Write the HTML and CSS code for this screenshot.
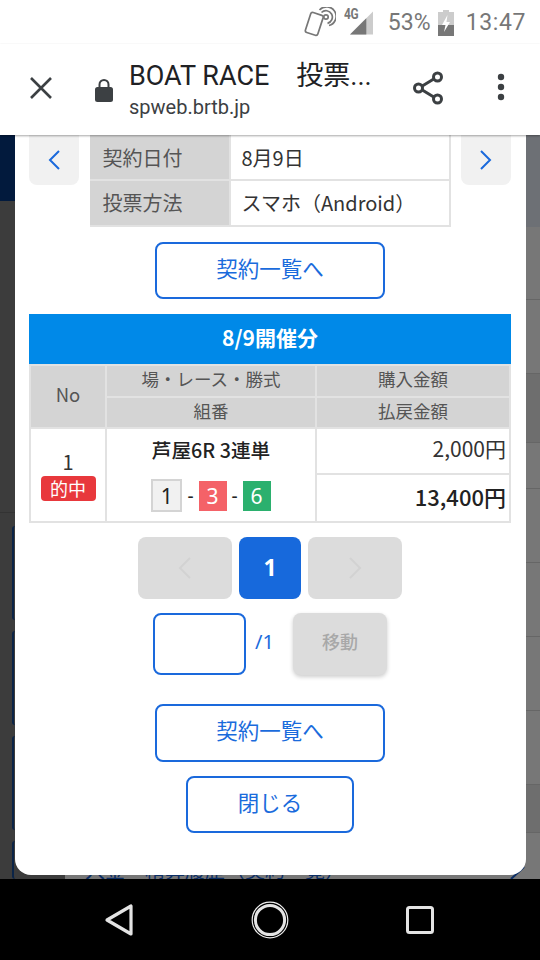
FILE: index.html
```html
<!DOCTYPE html>
<html lang="ja">
<head>
<meta charset="utf-8">
<title>BOAT RACE 投票</title>
<link rel="stylesheet" href="styles.css">
</head>
<body>
<div class="phone">
  <div class="status">
    <svg class="ic-nfc" viewBox="0 0 32 30" width="32" height="30"><g fill="none" stroke="#777" stroke-width="1.7"><rect x="-5" y="-10" width="13" height="21" rx="2" transform="translate(9 16) rotate(18)"/><circle cx="22" cy="10" r="2.2"/><path d="M17.5 5.5a6.4 6.4 0 1 1 6 10.8M15.5 3a9.5 9.5 0 1 1 9.5 15.5"/></g></svg>
    <span class="net">4G</span>
    <svg class="ic-signal" viewBox="0 0 24 24" width="24" height="24"><path d="M24 0V24H0Z" fill="#ccc"/><path d="M17 7V24H0Z" fill="#777"/></svg>
    <span class="pct">53%</span>
    <svg class="ic-batt" viewBox="0 0 16 26" width="16" height="26"><path d="M5 0h6v2h5v24H0V2h5Z" fill="#ccc"/><path d="M0 15h16v11H0Z" fill="#777"/><path d="M9.5 5 4 15h3.5L6 22l6-10H8.5Z" fill="#fff"/></svg>
    <span class="time">13:47</span>
  </div>
  <div class="toolbar">
    <svg class="ic-close" viewBox="0 0 24 24" width="24" height="24"><path d="M2 2 22 22M22 2 2 22" stroke="#3c4043" stroke-width="2.6" fill="none"/></svg>
    <svg class="ic-lock" viewBox="0 0 18 24" width="18" height="24"><path d="M4.5 10V6.500a4.500 4.500 0 0 1 9 0V10" fill="none" stroke="#3c4043" stroke-width="2"/><rect y="9" width="18" height="15" rx="2.500" fill="#3c4043"/></svg>
    <div class="title">
      <div class="title-main">BOAT RACE　投票...</div>
      <div class="title-sub">spweb.brtb.jp</div>
    </div>
    <svg class="ic-share" viewBox="0 0 32 34" width="32" height="34"><g fill="none" stroke="#3c4043" stroke-width="3"><path d="M7 17 25 6M7 17 25 28"/><circle cx="6.500" cy="17" r="4" fill="#fff"/><circle cx="25.500" cy="6" r="4" fill="#fff"/><circle cx="25.500" cy="28" r="4" fill="#fff"/></g></svg>
    <svg class="ic-more" viewBox="0 0 8 28" width="8" height="28"><circle cx="4" cy="4" r="3.200" fill="#3c4043"/><circle cx="4" cy="14" r="3.200" fill="#3c4043"/><circle cx="4" cy="24" r="3.200" fill="#3c4043"/></svg>
  </div>
  <div class="stage">
    <div class="side side-left">
      <div class="navy-top"></div>
      <div class="dark-a"></div>
      <div class="frame"></div>
      <div class="frame"></div>
      <div class="frame"></div>
      <div class="frame frame-last"></div>
    </div>
    <div class="center">
      <svg class="corner-stroke" viewBox="0 0 16 14" width="16" height="14"><path d="M1 14 14 2" stroke="#0b2e66" stroke-width="2" fill="none"/></svg>
      <div class="modal">
        <div class="info-row">
          <button class="arrow-btn"><svg viewBox="0 0 14 22" width="14" height="22"><path d="M12 2 3 11l9 9" fill="none" stroke="#1a69dc" stroke-width="2"/></svg></button>
          <table class="info">
            <tr><th>契約日付</th><td>8月9日</td></tr>
            <tr><th>投票方法</th><td>スマホ（Android）</td></tr>
          </table>
          <button class="arrow-btn"><svg viewBox="0 0 14 22" width="14" height="22"><path d="M2 2l9 9-9 9" fill="none" stroke="#1a69dc" stroke-width="2"/></svg></button>
        </div>
        <button class="btn btn-list btn-first">契約一覧へ</button>
        <div class="bar">8/9開催分</div>
        <table class="result">
          <colgroup><col class="c1"><col class="c2"><col class="c3"></colgroup>
          <tr class="h h-a"><th rowspan="2" class="no-h">No</th><th>場・レース・勝式</th><th>購入金額</th></tr>
          <tr class="h h-b"><th>組番</th><th>払戻金額</th></tr>
          <tr class="b1">
            <td rowspan="2" class="no"><div class="no-num">1</div><span class="hit">的中</span></td>
            <td rowspan="2" class="race">
              <div class="race-name">芦屋6R 3連単</div>
              <div class="combo"><span class="k k1">1</span><i>-</i><span class="k k3">3</span><i>-</i><span class="k k6">6</span></div>
            </td>
            <td class="amt">2,000円</td>
          </tr>
          <tr class="b2"><td class="amt amt-b">13,400円</td></tr>
        </table>
        <div class="pager">
          <span class="pg pg-wide"><svg viewBox="0 0 14 24" width="14" height="24"><path d="M12 2 2 12l10 10" fill="none" stroke="#d2d2d2" stroke-width="2"/></svg></span>
          <span class="pg pg-on">1</span>
          <span class="pg pg-wide"><svg viewBox="0 0 14 24" width="14" height="24"><path d="M2 2l10 10L2 22" fill="none" stroke="#d2d2d2" stroke-width="2"/></svg></span>
        </div>
        <div class="jump">
          <input class="jump-input" type="text" aria-label="page">
          <span class="jump-total">/1</span>
          <span class="jump-btn">移動</span>
        </div>
        <button class="btn btn-list btn-second">契約一覧へ</button>
        <button class="btn btn-close">閉じる</button>
      </div>
      <div class="peek"><div class="peek-text">入金・精算履歴（契約一覧）</div></div>
    </div>
    <div class="side side-right">
      <div class="sr sr-top"></div>
      <div class="sr h73"></div>
      <div class="sr h74"></div>
      <div class="sr h69 dk"></div>
      <div class="sr h46"></div>
      <div class="sr h74"></div>
      <div class="sr h74"></div>
      <div class="sr h74"></div>
      <div class="sr h74"></div>
      <div class="sr h48 dk"></div>
      <div class="sr fill"></div>
    </div>
  </div>
  <div class="navbar">
    <svg viewBox="0 0 30 34" width="30" height="34"><path d="M27 3V31L3 17Z" fill="none" stroke="#e4e4e4" stroke-width="3.200" stroke-linejoin="round"/></svg>
    <svg viewBox="0 0 38 38" width="38" height="38"><circle cx="19" cy="19" r="17.800" fill="none" stroke="#eee" stroke-width="1.200"/><circle cx="19" cy="19" r="14.600" fill="none" stroke="#e4e4e4" stroke-width="3"/></svg>
    <svg viewBox="0 0 28 28" width="28" height="28"><rect x="1.500" y="1.500" width="25" height="25" rx="2" fill="none" stroke="#e4e4e4" stroke-width="3"/></svg>
  </div>
</div>
</body>
</html>
```

FILE: styles.css
```css
* { box-sizing: border-box; }
html, body { margin: 0; padding: 0; }
body { width: 540px; height: 960px; overflow: hidden; background: #000; font-family: "Noto Sans CJK JP", "Noto Sans", sans-serif; }
.phone { width: 540px; height: 960px; display: flex; flex-direction: column; }

.status { height: 44px; background: #fff; display: flex; align-items: center; justify-content: flex-end; padding-right: 14px; color: #777; font-family: Roboto, sans-serif; }
.ic-nfc { margin-right: 8px; }
.net { font-size: 14px; font-weight: 700; align-self: flex-start; margin-top: 6px; width: 14px; letter-spacing: -0.5px; transform: scaleX(0.85); transform-origin: left; }
.ic-signal { margin-left: -8px; margin-right: 15px; margin-top: 2px; width: 23px; }
.pct { font-size: 23px; letter-spacing: 0.1px; margin-right: 7px; }
.ic-batt { margin-right: 12px; margin-top: 2px; }
.time { font-size: 23px; letter-spacing: 0.6px; }

.toolbar { height: 91px; background: #fff; display: flex; align-items: flex-start; box-shadow: 0 1px 2px rgba(0,0,0,.35); position: relative; z-index: 2; }
.ic-close { margin: 32px 0 0 29px; }
.ic-lock { margin: 34px 0 0 42px; }
.title { margin-left: 16px; width: 285px; color: #202124; font-family: Roboto, "Noto Sans CJK JP", sans-serif; }
.title-main { font-size: 27px; line-height: 30px; margin-top: 17px; white-space: nowrap; }
.title-sub { font-size: 20px; line-height: 24px; margin-top: 4px; color: #3c4043; }
.ic-share { margin: 27px 0 0 -2px; }
.ic-more { margin: 29px 0 0 53px; }

.stage { height: 744px; display: grid; grid-template-columns: 15px 511px 14px; overflow: hidden; }
.side { display: flex; flex-direction: column; }
.side-left { background: #3c3c3c; }
.navy-top { height: 66px; background: #021a3d; }
.dark-a { height: 312px; border-bottom: 1px solid #333; }
.frame { height: 94px; margin-top: 11px; margin-left: 12px; border-left: 2px solid #0b2447; border-radius: 4px 0 0 4px; }
.dark-a + .frame { margin-top: 13px; }
.frame-last { flex: 1; }
.sr { background: #777; border-bottom: 1px solid #666; }
.sr-top { height: 92px; background: #6d7075; border-bottom: 0; }
.h73 { height: 73px; }
.h74 { height: 74px; }
.h69 { height: 69px; }
.h46 { height: 46px; }
.h48 { height: 48px; }
.dk { background: #6e6e6e; }
.fill { flex: 1; border-bottom: 0; }

.center { display: flex; flex-direction: column; background: linear-gradient(90deg, #3c3c3c 50px, #777 50px); overflow: hidden; position: relative; }
.corner-stroke { position: absolute; right: 0; bottom: 0; }
.modal { height: 740px; flex: none; background: #fff; border-radius: 0 0 16px 16px; padding: 0 15px 0 14px; display: flex; flex-direction: column; align-items: center; position: relative; z-index: 1; }
.peek { height: 4px; padding-left: 70px; font-size: 20px; color: #0b2e66; overflow: hidden; white-space: nowrap; }
.peek-text { line-height: 20px; margin-top: -15px; }

.info-row { width: 482px; display: flex; justify-content: space-between; align-items: flex-start; flex: none; }
.arrow-btn { width: 50px; height: 50px; border: 0; padding: 0; background: #f1f1f1; border-radius: 0 0 8px 8px; display: flex; align-items: center; justify-content: center; }
.info { border-collapse: collapse; width: 361px; height: 91px; table-layout: fixed; font-size: 20px; line-height: 1.2; color: #333; }
.info th, .info td { border: 2px solid #e2e2e2; height: 46px; padding: 1px 0 1px 11px; text-align: left; font-weight: 400; }
.info tr:first-child th, .info tr:first-child td { border-top: 0; height: 45px; padding: 2px 0 0 11px; }
.info th { width: 140px; background: #d4d4d4; color: #555; border-left: 0; }
.info tr th, .info tr:first-child th { padding-left: 13px; }

.btn { background: #fff; border: 2px solid #1a69dc; border-radius: 8px; color: #1a6bdc; font-family: inherit; font-size: 21.5px; line-height: 1.2; padding: 0 0 6px; flex: none; }
.btn-list { width: 230px; height: 57px; }
.btn-first { margin-top: 15px; }
.btn-second { margin-top: 29px; height: 58px; }
.btn-close { width: 168px; height: 57px; margin-top: 14px; }

.bar { width: 482px; height: 50px; margin-top: 15px; padding-bottom: 4px; background: #0089e8; color: #fff; font-size: 21px; font-weight: 700; display: flex; align-items: center; justify-content: center; flex: none; }
.result { width: 482px; border-collapse: collapse; table-layout: fixed; border: 2px solid #e2e2e2; border-top: 0; flex: none; }
.c1 { width: 76px; }
.c2 { width: 210px; }
.result th, .result td { border: 2px solid #e2e2e2; padding: 0; }
.result th { background: #d4d4d4; font-weight: 400; color: #555; font-size: 17.5px; line-height: 1.2; padding-bottom: 5px; text-align: center; }
.h-a th { height: 32px; }
.h-b th { height: 31px; }
.result .no-h { font-size: 18.5px; }
.b1 td { height: 46px; }
.b2 td { height: 48px; }
.no { text-align: center; color: #333; font-size: 20px; }
.no-num { line-height: 24px; margin-top: 1px; }
.hit { display: block; width: 55px; height: 25px; line-height: 24px; margin: 2px auto 0; background: #e8383c; color: #fff; border-radius: 4px; font-size: 18px; }
.race { text-align: center; vertical-align: top; }
.race-name { font-size: 19.7px; font-weight: 500; color: #222; line-height: 28px; margin-top: 7px; }
.combo { display: flex; justify-content: center; align-items: center; gap: 5px; margin-top: 15px; font-size: 19px; color: #222; }
.combo i { font-style: normal; font-family: "Noto Sans", sans-serif; }
.k { width: 28px; height: 30px; display: flex; align-items: center; justify-content: center; font-family: "Noto Sans", sans-serif; font-size: 21px; }
.k1 { width: 31px; height: 33px; background: #f1f1f1; border: 2px solid #d4d4d4; color: #222; }
.k3 { background: #f46268; color: #fff; }
.k6 { background: #2bb06e; color: #fff; }
.result .amt { text-align: right; padding: 0 3px 4px 0; font-size: 21px; line-height: 1.2; color: #333; }
.result .amt-b { font-weight: 500; font-size: 22px; color: #222; padding-bottom: 4px; }

.pager { display: flex; gap: 7px; margin-top: 14px; flex: none; }
.pg { height: 62px; border-radius: 8px; display: flex; align-items: center; justify-content: center; }
.pg-wide { width: 94px; background: #dcdcdc; }
.pg-on { width: 62px; padding-bottom: 3px; background: #1769dc; color: #fff; font-family: "Noto Sans", sans-serif; font-size: 23px; font-weight: 700; }
.jump { width: 234px; display: flex; align-items: center; margin-top: 14px; flex: none; }
.jump-input { width: 93px; height: 62px; border: 2px solid #1a69dc; border-radius: 8px; background: #fff; padding: 0; }
.jump-total { width: 47px; padding: 0 0 5px 9px; font-family: "Noto Sans", sans-serif; font-size: 20px; color: #1a6bdc; }
.jump-btn { width: 94px; height: 62px; padding-bottom: 6px; background: #dcdcdc; border-radius: 8px; box-shadow: 0 2px 4px rgba(0,0,0,.2); color: #a8a8a8; font-size: 18px; font-weight: 500; display: flex; align-items: center; justify-content: center; }

.navbar { flex: 1; background: #000; display: flex; align-items: center; padding-left: 104px; gap: 117px; }
```
